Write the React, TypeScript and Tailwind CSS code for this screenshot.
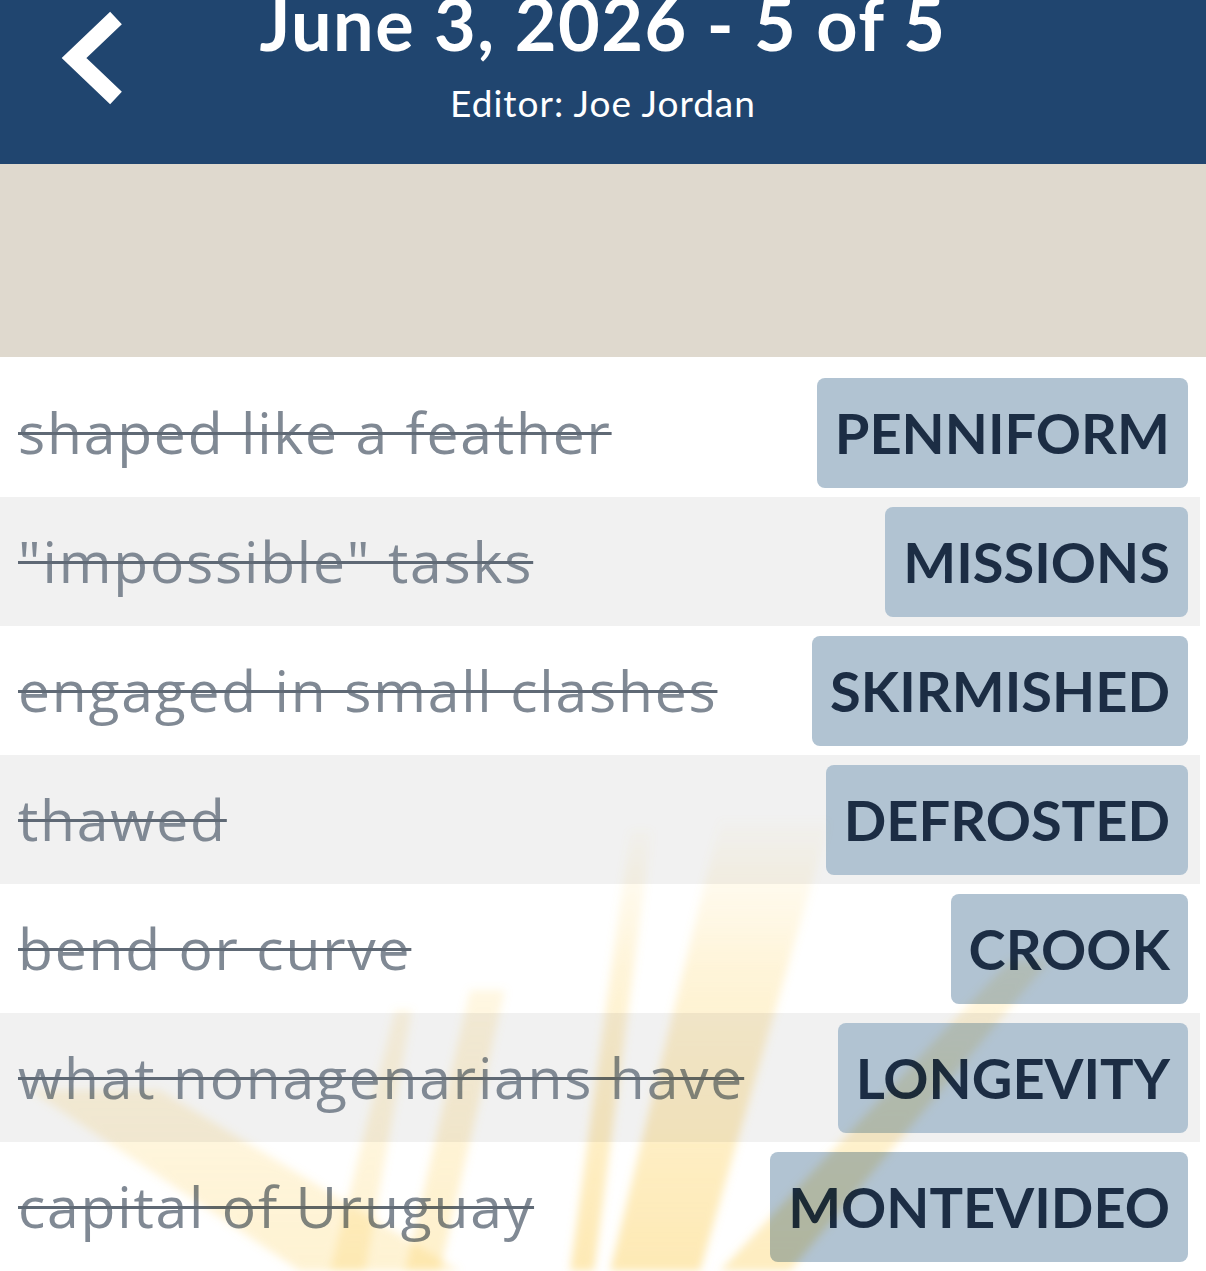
import React from "react";

const rows = [
  { clue: "shaped like a feather", answer: "PENNIFORM" },
  { clue: "\"impossible\" tasks", answer: "MISSIONS" },
  { clue: "engaged in small clashes", answer: "SKIRMISHED" },
  { clue: "thawed", answer: "DEFROSTED" },
  { clue: "bend or curve", answer: "CROOK" },
  { clue: "what nonagenarians have", answer: "LONGEVITY" },
  { clue: "capital of Uruguay", answer: "MONTEVIDEO" },
];

function Rays() {
  const o = 357;
  const rays: { p: [number, number][]; a: number }[] = [
    { p: [[720, 820], [830, 820], [700, 1271], [610, 1271]], a: 1 },
    { p: [[630, 830], [652, 830], [594, 1271], [570, 1271]], a: 1 },
    { p: [[1010, 960], [1050, 960], [790, 1271], [720, 1271]], a: 0.85 },
    { p: [[30, 1090], [160, 1090], [460, 1271], [300, 1271]], a: 0.6 },
    { p: [[470, 990], [505, 990], [440, 1271], [405, 1271]], a: 0.7 },
    { p: [[395, 1010], [412, 1010], [365, 1271], [330, 1271]], a: 0.6 },
  ];
  return (
    <svg
      className="pointer-events-none absolute inset-0 h-full w-full mix-blend-multiply"
      viewBox="0 0 1206 914"
      preserveAspectRatio="none"
    >
      <defs>
        <linearGradient id="rayfade" x1="0" y1={810 - o} x2="0" y2={1271 - o} gradientUnits="userSpaceOnUse">
          <stop offset="0" stopColor="#fcd46a" stopOpacity="0" />
          <stop offset="0.35" stopColor="#fcd46a" stopOpacity="0.26" />
          <stop offset="1" stopColor="#fcd46a" stopOpacity="0.5" />
        </linearGradient>
        <filter id="soft" x="-20%" y="-20%" width="140%" height="140%">
          <feGaussianBlur stdDeviation="4" />
        </filter>
      </defs>
      <g filter="url(#soft)">
        {rays.map((r, i) => (
          <polygon
            key={i}
            points={r.p.map(([x, y]) => `${x},${y - o}`).join(" ")}
            fill="url(#rayfade)"
            opacity={r.a}
          />
        ))}
      </g>
    </svg>
  );
}

export default function App() {
  return (
    <div
      className="w-[1206px] h-[1271px] overflow-hidden bg-white"
      style={{ fontFamily: "Lato, 'Open Sans', sans-serif" }}
    >
      <header className="relative h-[164px] bg-[#20456f] flex flex-col items-center text-white">
        <svg
          className="absolute left-[52px] top-[8px]"
          width="80"
          height="100"
          viewBox="0 0 80 100"
        >
          <polyline
            points="64,10 22,50 64,90"
            fill="none"
            stroke="#ffffff"
            strokeWidth="17"
            strokeLinejoin="miter"
            strokeLinecap="butt"
          />
        </svg>
        <div className="mt-[-13px] text-[72px] leading-[72px] font-bold tracking-[1.5px] whitespace-nowrap">
          June 3, 2026 - 5 of 5
        </div>
        <div className="mt-[25px] text-[37px] leading-[37px] tracking-[1px] whitespace-nowrap">
          Editor: Joe Jordan
        </div>
      </header>
      <div className="h-[193px] bg-[#dfd9ce]" />
      <div className="relative pt-[11px]">
        {rows.map((r, i) => (
          <div
            key={i}
            className={`mr-[6px] h-[129px] flex items-center justify-between pl-[18px] pr-[12px] ${
              i % 2 === 1 ? "bg-[#f1f1f1]" : "bg-white"
            }`}
          >
            <span
              className="text-[57px] leading-none tracking-[1.8px] text-[#808994] line-through decoration-[#5f6975] decoration-[3px] whitespace-nowrap"
              style={{ fontFamily: "'Open Sans', Lato, sans-serif" }}
            >
              {r.clue}
            </span>
            <div className="h-[110px] rounded-[8px] bg-[#b1c3d2] px-[18px] flex items-center text-[56px] font-bold text-[#1c2d44] whitespace-nowrap">
              {r.answer}
            </div>
          </div>
        ))}
        <Rays />
      </div>
    </div>
  );
}
